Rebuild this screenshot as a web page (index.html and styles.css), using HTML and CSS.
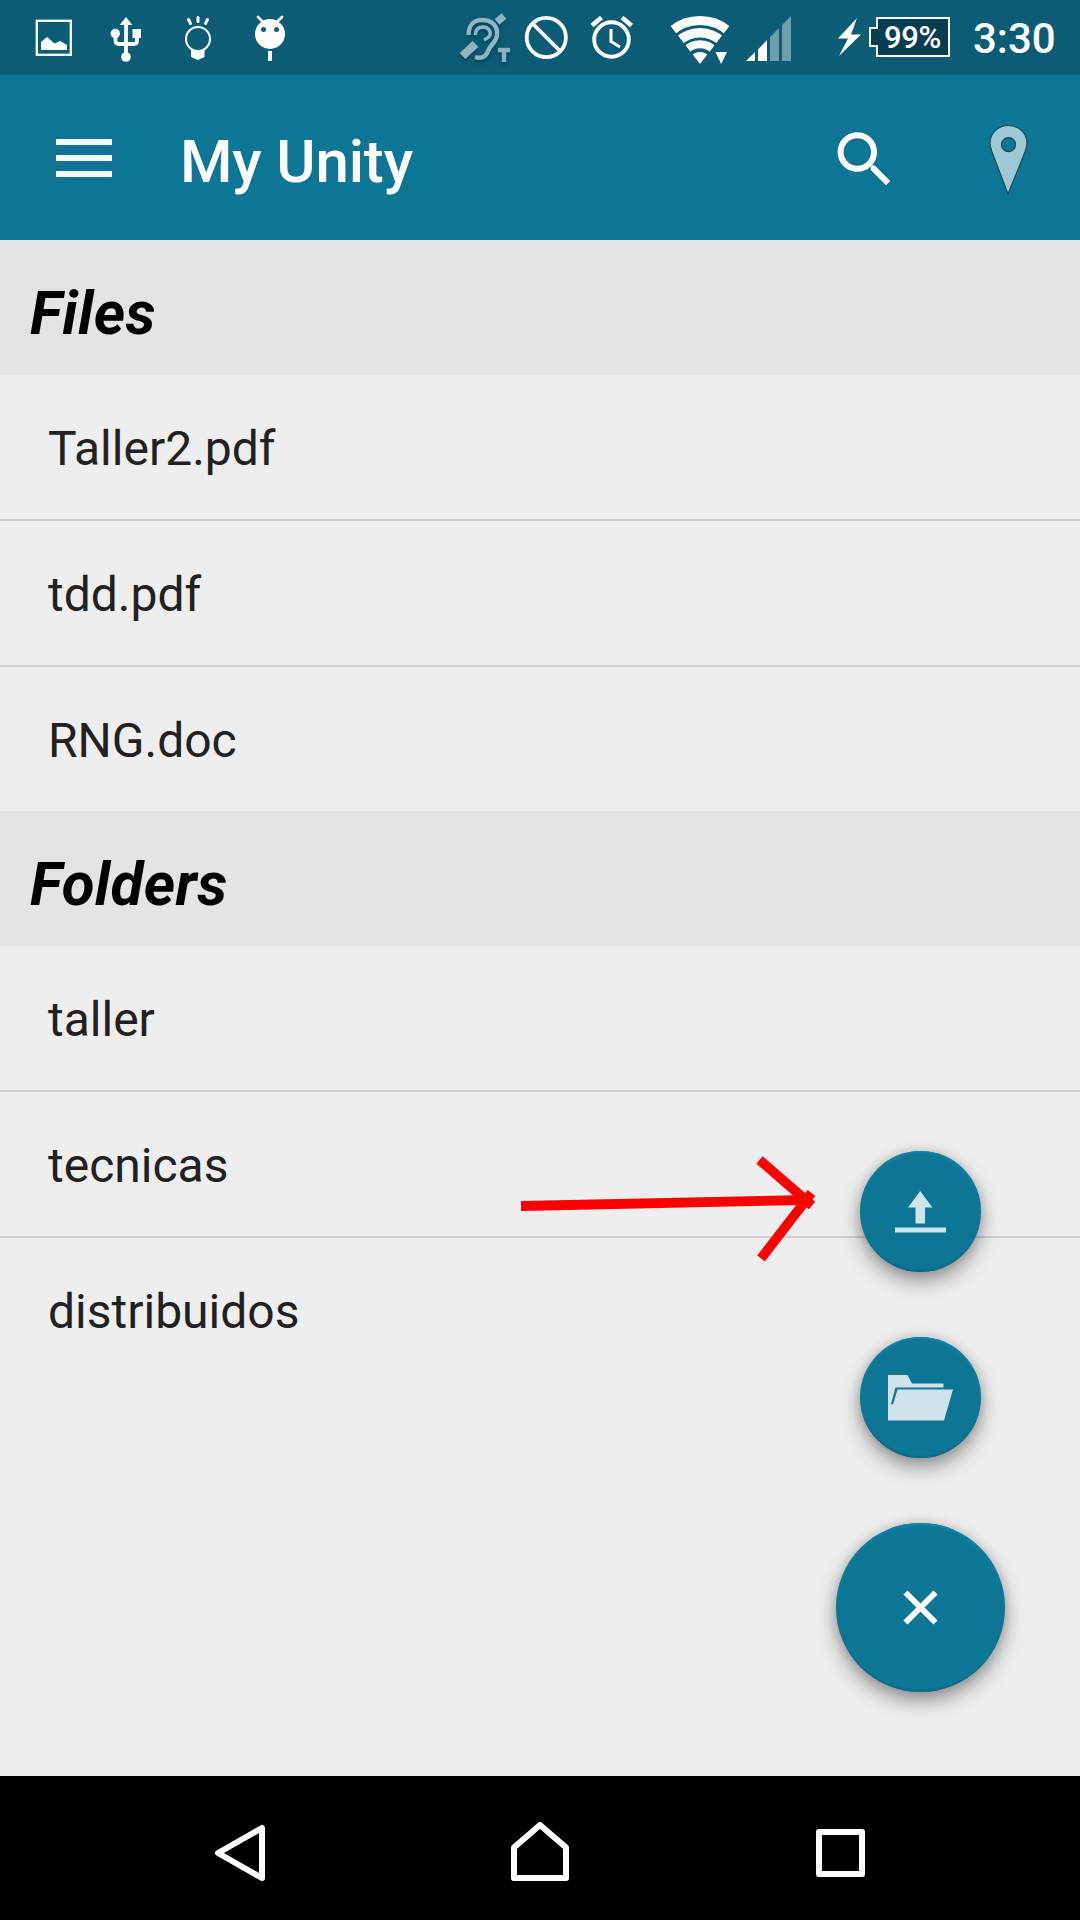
FILE: index.html
```html
<!DOCTYPE html>
<html lang="en">
<head>
<meta charset="utf-8">
<title>My Unity</title>
<link rel="stylesheet" href="styles.css">
</head>
<body>
<div class="screen">
  <header class="status">
    <div class="notifications">
      <svg width="48" height="75" viewBox="30 0 48 75">
        <rect x="36.800" y="20.800" width="34" height="34" fill="none" stroke="#fff" stroke-width="2.300"/>
        <path d="M41 50V42L47 37L54.500 43.500L60 41L67 45V50Z" fill="#fff"/>
      </svg>
      <svg width="48" height="75" viewBox="102 0 48 75">
        <path d="M126 17L132.300 25H119.700Z" fill="#fff"/>
        <path d="M126 23V56M115.500 34V41Q115.500 44 119 44H133.500Q137 44 137 41V36" fill="none" stroke="#fff" stroke-width="3.800"/>
        <circle cx="115.300" cy="33.500" r="4.700" fill="#fff"/>
        <circle cx="126" cy="57" r="4.800" fill="#fff"/>
        <rect x="132.500" y="29" width="8.500" height="9" fill="#fff"/>
      </svg>
      <svg width="48" height="75" viewBox="174 0 48 75">
        <circle cx="198" cy="39" r="12" fill="none" stroke="#fff" stroke-width="2"/>
        <path d="M191 48Q198 53 204.500 48V57L198 60L191 57Z" fill="#fff"/>
        <path d="M188.500 19.500L190.500 23.500M198 17.500V21.500M207.500 19.500L205.500 23.500" stroke="#fff" stroke-width="3" stroke-linecap="round"/>
      </svg>
      <svg width="48" height="75" viewBox="246 0 48 75">
        <circle cx="270" cy="34" r="15" fill="#fff"/>
        <path d="M258 17L263 22M282 17L277 22" stroke="#fff" stroke-width="2.600" stroke-linecap="round"/>
        <circle cx="263.500" cy="29.500" r="2.500" class="cutout"/>
        <circle cx="276.500" cy="29.500" r="2.500" class="cutout"/>
        <path d="M270 51V61" stroke="#fff" stroke-width="4"/>
      </svg>
    </div>
    <div class="indicators">
      <svg class="hearing" width="60" height="75" viewBox="456 0 60 75">
        <g fill="none" stroke="#8fb6c5" stroke-width="4.400">
          <path d="M468.500 35C468.500 24 475 20 482 20C492 20 498 26 497 35C496 43 490 45 488 51C486 57 481 59 475 57"/>
          <path d="M475.500 35C475.500 29 479 27 483 27C488 27 491 31 490 35C489 38 486 39 484 40" stroke-width="3.400"/>
          <path d="M475.500 44L462.500 56" stroke-width="8.500"/>
          <path d="M497 22L504 16" stroke-width="7.500"/>
          <path d="M498 50H510M504 50V62" stroke="#8cb1c0"/>
        </g>
      </svg>
      <svg width="48" height="75" viewBox="522 0 48 75">
        <g fill="none" stroke="#fff" stroke-width="3.800"><circle cx="546.300" cy="37.500" r="19.600"/><path d="M533 24L560 51"/></g>
      </svg>
      <svg width="48" height="75" viewBox="588 0 48 75">
        <g fill="none" stroke="#fff"><circle cx="611.500" cy="39.500" r="17.300" stroke-width="3.900"/><path d="M611 29V41.500L620 47" stroke-width="3"/><path d="M592 25.500L601.500 17.500M631.500 25.500L622 17.500" stroke-width="4.500"/></g>
      </svg>
      <svg class="wifi" width="60" height="75" viewBox="670 0 60 75">
        <clipPath id="fan"><path d="M700 64L666 20V10H734V20Z"/></clipPath>
        <g clip-path="url(#fan)" fill="none" stroke="#fff">
          <circle cx="700" cy="64" r="43.500" stroke-width="9"/>
          <circle cx="700" cy="64" r="31.300" stroke-width="9.500"/>
          <circle cx="700" cy="64" r="19.700" stroke-width="8"/>
          <circle cx="700" cy="64" r="6" stroke-width="12"/>
        </g>
        <path d="M715.500 52H727L721.200 64Z" fill="#fff"/>
      </svg>
      <svg class="signal" width="48" height="75" viewBox="744 0 48 75">
        <path d="M746 61L755 52V61ZM758 61V49.500L767 40V61Z" fill="#fff"/>
        <path d="M770 61V37L779 28V61ZM782 61V25L791 16V61Z" fill="#6e9dae"/>
      </svg>
      <svg class="bolt" width="24" height="75" viewBox="838 0 24 75"><path d="M857 18L838 38.500H848L839 56L861 34.500H851Z" fill="#fff"/></svg>
      <div class="battery">
        <svg width="82" height="42" viewBox="869 16 82 42"><path d="M877 18H949V56H877V46H870V28H877Z" fill="#063d50" stroke="#fff" stroke-width="2"/></svg>
        <span class="level">99%</span>
      </div>
      <span class="time">3:30</span>
    </div>
  </header>

  <div class="toolbar">
    <svg width="56" height="38" viewBox="0 0 56 38"><path d="M0 3H56M0 19H56M0 35H56" stroke="#fff" stroke-width="6"/></svg>
    <h1 class="title">My Unity</h1>
    <svg class="search" width="54" height="54" viewBox="837 132 54 54">
      <circle cx="857.300" cy="152" r="16.700" fill="none" stroke="#fff" stroke-width="6"/>
      <path d="M871 167.500V170L886 185L890 181L875 166L872 165Z" fill="#fff" stroke="#fff" stroke-width=".5"/>
    </svg>
    <svg class="pin" width="40" height="72" viewBox="988 124 40 72">
      <path fill-rule="evenodd" d="M1008.500 125.500C1019 125.500 1027 133.500 1027 143C1027 147 1026 149 1025 152L1008 194L992 152C991 149 990 147 990 143C990 133.500 998 125.500 1008.500 125.500ZM1008.500 137.700A7 7 0 1 0 1008.500 151.700A7 7 0 1 0 1008.500 137.700Z" fill="#9fc8d5" stroke="#124a5c" stroke-width="1.200"/>
    </svg>
  </div>

  <main class="content">
    <section>
      <h2 class="heading">Files</h2>
      <ul class="list">
        <li class="item">Taller2.pdf</li>
        <li class="item">tdd.pdf</li>
        <li class="item">RNG.doc</li>
      </ul>
    </section>
    <section>
      <h2 class="heading">Folders</h2>
      <ul class="list">
        <li class="item">taller</li>
        <li class="item">tecnicas</li>
        <li class="item">distribuidos</li>
      </ul>
    </section>
  </main>

  <svg class="arrow" width="300" height="110" viewBox="520 1154 300 110">
    <path d="M521 1206L806 1200" stroke="#f00" stroke-width="9.800"/>
    <path d="M759.500 1160L812 1205.500M761 1258.500L811.500 1193" fill="none" stroke="#f00" stroke-width="9.600"/>
  </svg>

  <div class="actions">
    <button class="fab" aria-label="Upload">
      <svg width="121" height="121" viewBox="860.500 1151.500 121 121" fill="#cfe3ea"><path d="M920.700 1191.500L933 1208H925.500V1224H916V1208H908.500ZM895.500 1228H946.500V1233H895.500Z"/></svg>
    </button>
    <button class="fab" aria-label="New folder">
      <svg width="121" height="121" viewBox="860.500 1337.500 121 121" fill="#cfe3ea"><path d="M888.500 1375.500H908L912.500 1384H944V1388H896L891.500 1404.500L893.500 1405L898 1390H953.500L944.500 1421H888.500Z"/></svg>
    </button>
    <button class="fab main" aria-label="Close">
      <svg width="169" height="169" viewBox="0 0 169 169"><path d="M69.500 69.500L99.500 99.500M99.500 69.500L69.500 99.500" stroke="#fff" stroke-width="5.800"/></svg>
    </button>
  </div>

  <nav class="navbar">
    <svg width="54" height="62" viewBox="213 1822 54 62"><path d="M218 1853L262 1828V1878Z"/></svg>
    <svg width="62" height="62" viewBox="509 1822 62 62"><path d="M514 1847.500L540 1825L566 1847.500V1878H514Z"/></svg>
    <svg width="54" height="62" viewBox="813 1822 54 62"><path d="M819 1832H862V1874H819Z"/></svg>
  </nav>
</div>
</body>
</html>
```
FILE: styles.css
```css
* { box-sizing: border-box; }
body { margin: 0; font-family: Roboto, sans-serif; }
svg { display: block; flex: none; }

.screen {
  position: relative;
  display: flex;
  flex-direction: column;
  width: 1080px;
  height: 1920px;
  overflow: hidden;
  background: #eee;
}

.status {
  display: flex;
  justify-content: space-between;
  height: 75px;
  padding: 0 24px 0 30px;
  background: #0c5c76;
  color: #fff;
}
.notifications { display: flex; gap: 24px; }
.cutout { fill: #0c5c76; }
.indicators { display: flex; }
.hearing { margin-right: 6px; filter: blur(.5px) drop-shadow(0 2px 2px #063d50); }
.hearing + svg { margin-right: 18px; }
.wifi { margin-left: 34px; }
.signal { margin-left: 14px; }
.bolt { margin: 0 7px 0 46px; }
.battery { position: relative; margin-top: 16px; width: 82px; height: 42px; }
.level {
  position: absolute;
  left: 15px;
  top: 3px;
  font-size: 31px;
  line-height: 38px;
  font-weight: 500;
  letter-spacing: -0.4px;
}
.time {
  width: 83px;
  margin-left: 22px;
  font-size: 42px;
  line-height: 78px;
  font-weight: 500;
  white-space: nowrap;
}

.toolbar {
  display: flex;
  align-items: center;
  height: 165px;
  padding: 0 52px 0 56px;
  background: #0e7695;
  color: #fff;
}
.title {
  flex: 1;
  margin: 9px 0 0 68px;
  font-size: 60px;
  line-height: 70px;
  font-weight: 500;
  letter-spacing: -0.15px;
}
.search { margin-right: 97px; margin-top: 3px; }
.pin { margin-top: 5px; }

.content { flex: 1; }
.heading {
  height: 135px;
  margin: 0;
  padding: 12px 30px 0;
  background: #e4e4e4;
  color: #000;
  font-size: 60px;
  line-height: 123px;
  font-weight: 700;
  font-style: italic;
  letter-spacing: 0.35px;
}
.list { margin: 0; padding: 0; list-style: none; }
.item {
  height: 144px;
  padding: 2px 48px 0;
  color: #212121;
  font-size: 48px;
  line-height: 144px;
}
.item:not(:last-child) { height: 146px; border-bottom: 2px solid #cfcfcf; }

.arrow { position: absolute; left: 520px; top: 1154px; }

.actions {
  position: absolute;
  left: 836px;
  top: 1151px;
  display: flex;
  flex-direction: column;
  align-items: center;
  gap: 65px;
}
.fab {
  width: 121px;
  height: 121px;
  padding: 0;
  border: 0;
  border-radius: 50%;
  background: #0e7695;
  box-shadow: 0 9px 20px rgba(0, 0, 0, .38), 0 0 12px rgba(0, 0, 0, .12),
    inset 0 3px 2px -1px #1285a8, inset 0 -3px 2px -1px #0c6a86;
}
.main { width: 169px; height: 169px; }

.navbar {
  display: flex;
  justify-content: space-between;
  align-items: center;
  height: 144px;
  padding: 10px 213px 0;
  background: #000;
}
.navbar path { fill: none; stroke: #fff; stroke-width: 6; stroke-linejoin: round; }
```
